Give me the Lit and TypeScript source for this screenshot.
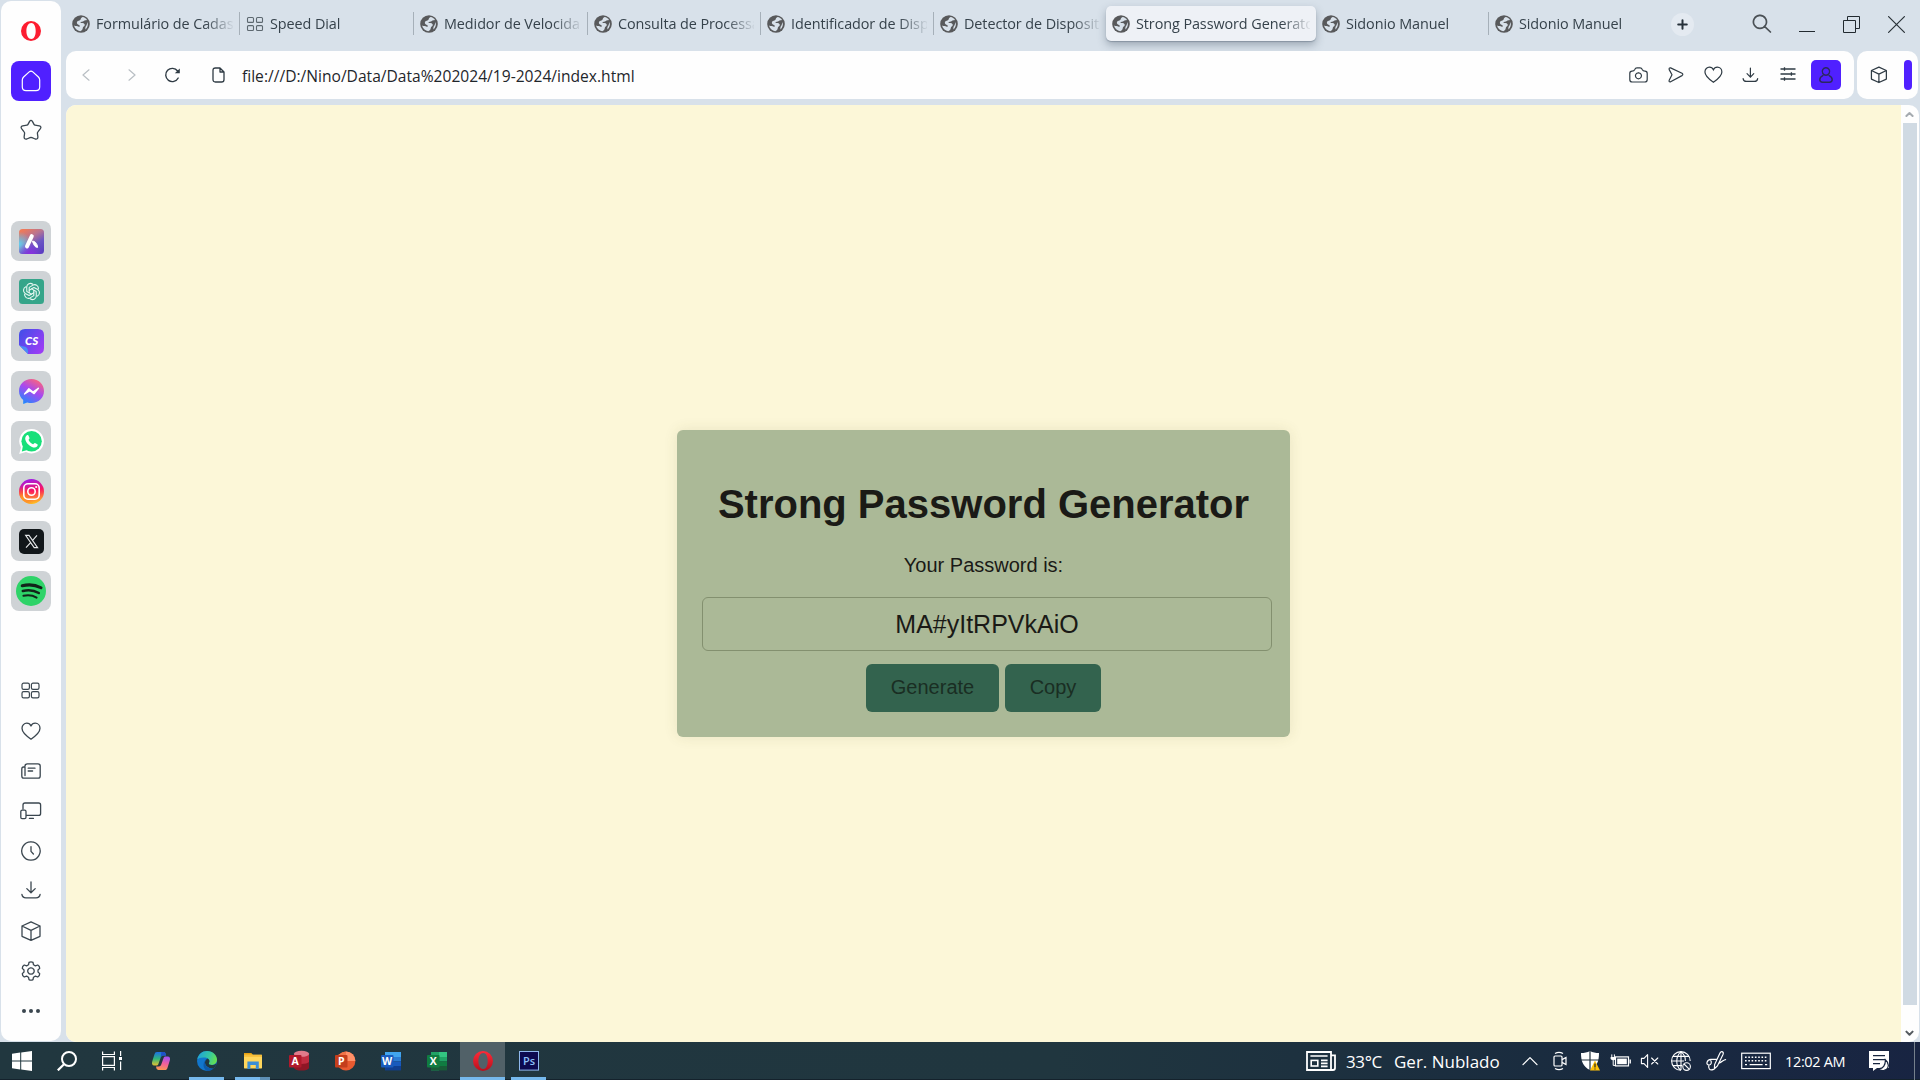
import { LitElement, html, svg, css, nothing } from "lit";
import { customElement, property, state } from "lit/decorators.js";
import { classMap } from "lit/directives/class-map.js";

/* ---------- icon drawings ---------- */

const pic = (w: number, h: number, body: unknown) => html`<svg
  width=${w} height=${h} viewBox="0 0 ${w} ${h}" fill="none">${body}</svg>`;

const line = (w: number, h: number, d: string, color = "#3a464f", sw = 1.3) =>
  pic(w, h, svg`<path d=${d} stroke=${color} stroke-width=${sw} stroke-linecap="round" stroke-linejoin="round"/>`);

const HEART = "M10 17.2 C6.5 14.8 1 10.8 1 6.3 C1 3.3 3.2 1.2 5.8 1.2 C7.8 1.2 9.3 2.4 10 4 C10.7 2.4 12.2 1.2 14.2 1.2 C16.8 1.2 19 3.3 19 6.3 C19 10.8 13.5 14.8 10 17.2 Z";
const BOX = "M10 .8 L19 5 V15.3 L10 19.4 L1 15.3 V5 Z M1 5 L10 9.3 L19 5 M10 9.3 V19.4";
const DOWN = "M10 1 V11.5 M5.8 7.6 L10 11.7 L14.2 7.6 M.9 13.4 C1.2 15.8 2.6 16.8 5 16.8 H15 C17.4 16.8 18.8 15.8 19.1 13.4";

const globe = () => pic(18, 18, svg`
  <circle cx="9" cy="9" r="8.8" fill="#58595b"/>
  <path d="M10.6 1.9 C12.4 2.2 14 3.3 15 4.8 C14.4 5.6 12.6 5 11.8 6 C11 7.2 9 6.4 8.2 7.6 C9.4 8.4 11.6 7.8 12.6 9.2 C13.4 11 11 11.4 10.8 13 C10.6 14.6 9.6 16 8.2 16.2 C5.2 15.9 2.6 13.6 2 10.6 C3.6 11.4 5.4 11 6.8 11.8 C8 11.8 8.2 10.4 7 9.9 C5.4 9.6 4.4 8.4 5 7 C5.6 5.4 8 6 8.6 4.6 C8.8 3.4 9.4 2.2 10.6 1.9 Z" fill="#d8e1ea"/>
  <path d="M15.6 7 C16.4 9.6 15.6 12.6 13.6 14.4 C13 12.8 13.6 11.6 14.4 10.6 C15 9.6 15.2 8.2 15.6 7 Z" fill="#d8e1ea"/>`);
const dial = () => pic(18, 18, svg`<g stroke="#5d6870" stroke-width="1.1">
  <rect x="1.5" y="2.5" width="6" height="4.9" rx="1"/><rect x="10.5" y="2.5" width="6" height="4.9" rx="1"/>
  <rect x="1.5" y="10.6" width="6" height="4.9" rx="1"/><rect x="10.5" y="10.6" width="6" height="4.9" rx="1"/></g>`);
const operaO = (id: string, a: string, b: string) => pic(20, 20, svg`
  <defs><linearGradient id=${id} x1="0" y1="0" x2="0" y2="1"><stop offset="0" stop-color=${a}/><stop offset="1" stop-color=${b}/></linearGradient></defs>
  <path fill-rule="evenodd" fill="url(#${id})" d="M10 0 A10 10 0 1 0 10 20 A10 10 0 1 0 10 0 Z M10.3 2 C13 2 14.7 5.4 14.7 10 C14.7 14.6 13 18 10.3 18 C7.4 18 5.4 14.6 5.4 10 C5.4 5.4 7.4 2 10.3 2 Z"/>`);
const home = () => line(20, 22, "M1.3 10 C1.3 8.6 1.7 7.9 2.6 7 L8.2 1.9 C9.4 .9 10.6 .9 11.8 1.9 L17.4 7 C18.3 7.9 18.7 8.6 18.7 10 V17 C18.7 19.4 17.4 20.6 15 20.6 H5 C2.6 20.6 1.3 19.4 1.3 17 Z", "#fff", 1.2);
const star = () => line(22, 22, "M9.6 2.4 Q11 .4 12.4 2.4 L14 5.4 Q14.3 6 15 6.1 L19.3 6.9 Q21.8 7.6 20.4 9.6 L17.9 12.8 Q17.3 13.5 17.4 14.4 L17.9 18 Q17.8 20.7 15.2 20 L12 18.7 Q11 18.3 10 18.7 L6.8 20 Q4.2 20.7 4.1 18 L4.6 14.4 Q4.7 13.5 4.1 12.8 L1.6 9.6 Q.2 7.6 2.7 6.9 L7 6.1 Q7.7 6 8 5.4 Z");

const appIcons = [
  // Aria
  () => pic(25, 25, svg`<defs>
    <linearGradient id="ar" x1=".2" y1="0" x2=".8" y2="1"><stop offset="0" stop-color="#f07a58"/><stop offset=".35" stop-color="#b87490"/><stop offset=".65" stop-color="#6a56c4"/><stop offset="1" stop-color="#5a3fc0"/></linearGradient>
    <radialGradient id="ar2" cx="0" cy=".6" r=".5"><stop offset="0" stop-color="#5fd0f0"/><stop offset="1" stop-color="#5fd0f0" stop-opacity="0"/></radialGradient>
    <radialGradient id="ar3" cx=".45" cy="1" r=".5"><stop offset="0" stop-color="#8a30e0"/><stop offset="1" stop-color="#8a30e0" stop-opacity="0"/></radialGradient></defs>
    <rect width="25" height="25" rx="3.5" fill="url(#ar)"/><rect width="25" height="25" rx="3.5" fill="url(#ar2)"/><rect width="25" height="25" rx="3.5" fill="url(#ar3)"/>
    <path d="M12.8 7.2 L8 17.4" stroke="#fff" stroke-width="4" stroke-linecap="round"/>
    <path d="M13.2 12.2 C15.6 11.8 18.4 14.4 18.6 18.4 C15.8 18.4 15.2 16.2 13.2 12.2 Z" fill="#fff" stroke="#fff" stroke-width="1"/>`),
  // ChatGPT
  () => pic(25, 25, svg`<rect width="25" height="25" rx="3.5" fill="#36a58a"/>
    <g stroke="#e6f6f1" stroke-width="1.1" stroke-linejoin="round" stroke-linecap="round">
    ${[0, 60, 120, 180, 240, 300].map((a) => svg`<path transform="rotate(${a} 12.5 12.5)" d="M10.2 13.8 V8.4 L14 6.1 C16.6 4.8 19.8 6.8 19.4 10"/>`)}</g>`),
  // ChatSonic
  () => pic(25, 25, svg`<defs><linearGradient id="cs" x1="0" y1="0" x2="1" y2=".7"><stop offset="0" stop-color="#3d4fe8"/><stop offset="1" stop-color="#9a3df5"/></linearGradient></defs>
    <path d="M6 0 H19 Q25 0 25 6 V19 Q25 25 19 25 H9 L0 16 V6 Q0 0 6 0 Z" fill="url(#cs)"/>
    <path d="M0 16 L9 25 C9.4 21 8.8 19 6.8 18 C4.6 17 2 17.6 0 16 Z" fill="#4a8cf8"/>
    <text x="12.6" y="16.2" text-anchor="middle" font-family="Lato, sans-serif" font-weight="900" font-style="italic" font-size="11.5" fill="#fff">CS</text>`),
  // Messenger
  () => pic(25, 25, svg`<defs><linearGradient id="ms" x1=".75" y1="0" x2=".2" y2="1"><stop offset="0" stop-color="#ff6678"/><stop offset=".45" stop-color="#a848f0"/><stop offset="1" stop-color="#1a8cff"/></linearGradient></defs>
    <path d="M12.5 0 C5.4 0 0 5.2 0 12 C0 15.8 1.6 18.8 4.2 21 V25 L8.2 23.4 C9.6 23.8 11 24 12.5 24 C19.6 24 25 18.8 25 12 C25 5.2 19.6 0 12.5 0 Z" fill="url(#ms)"/>
    <path d="M5.6 15 L9.9 9.8 L14 13 L19.4 9.2 L15.1 14.6 L10.8 11.7 Z" fill="#fff" stroke="#fff" stroke-width="1.4" stroke-linejoin="round"/>`),
  // WhatsApp
  () => pic(25, 25, svg`<path d="M12.7 0 A12.2 12.2 0 0 0 2 18.4 L.2 25 L7 23 A12.2 12.2 0 1 0 12.7 0 Z" fill="#fff"/>
    <circle cx="12.6" cy="12.3" r="10.2" fill="#18e07a"/><path d="M2.8 22.4 L4 16.6 L8.6 21 Z" fill="#18e07a"/>
    <path d="M7.6 6.6 C8.4 5.8 9.3 6 9.6 6.8 L10.5 9 C10.7 9.8 9.6 10.4 9.6 11 C10.2 12.8 12.2 14.6 14 15.2 C14.8 15.3 15.2 13.8 16 14 L18.4 15.2 C19.4 16 18.2 18.2 16 18.6 C11.4 18.6 6.2 13.4 6.2 9.4 C6.3 8.2 6.9 7.2 7.6 6.6 Z" fill="#fff"/>`),
  // Instagram
  () => pic(25, 25, svg`<defs><linearGradient id="ig" x1=".3" y1="0" x2=".5" y2="1"><stop offset="0" stop-color="#9a1df0"/><stop offset=".5" stop-color="#fb1560"/><stop offset="1" stop-color="#ffc020"/></linearGradient>
    <radialGradient id="ig2" cx=".1" cy=".8" r=".5"><stop offset="0" stop-color="#ffa820"/><stop offset="1" stop-color="#ff8020" stop-opacity="0"/></radialGradient></defs>
    <circle cx="12.5" cy="12.5" r="12.5" fill="url(#ig)"/><circle cx="12.5" cy="12.5" r="12.5" fill="url(#ig2)"/>
    <rect x="4.8" y="4.8" width="15.4" height="15.4" rx="4.2" stroke="#fff" stroke-width="1.6"/>
    <circle cx="12.5" cy="12.5" r="3.7" stroke="#fff" stroke-width="1.6"/><circle cx="17.2" cy="8" r="1.1" fill="#fff"/>`),
  // X
  () => pic(25, 25, svg`<rect width="25" height="25" rx="5" fill="#12171a"/>
    <path d="M6.6 6.4 H10 L18.6 18.6 H15.2 Z M18 6.4 L13.4 11.6 M11.6 13.6 L7 18.6" stroke="#e8eaeb" stroke-width="1.1"/>`),
  // Spotify
  () => pic(30, 30, svg`<circle cx="15" cy="15" r="15" fill="#2ed368"/>
    <g stroke="#12231a" stroke-linecap="round"><path d="M6.2 9.8 C12.6 8.2 19.4 8.8 25 11.8" stroke-width="3"/><path d="M6.8 15 C12.4 13.6 18 14.2 22.8 17" stroke-width="2.5"/><path d="M7.4 19.8 C12 18.8 16.6 19.2 20.6 21.6" stroke-width="2"/></g>`),
];

const toolIcons = [
  () => pic(19, 17, svg`<g stroke="#3a464f" stroke-width="1.2"><rect x="1" y="1.2" width="7.4" height="6.2" rx="1.6"/><rect x="10.4" y="1.2" width="7.6" height="6.2" rx="1.6"/><rect x="1" y="9.6" width="7.4" height="6.2" rx="1.6"/><rect x="10.4" y="9.6" width="7.6" height="6.2" rx="1.6"/></g>`),
  () => line(20, 18, HEART),
  () => line(20, 16, "M4 3 C4 1.4 4.8 .8 6.4 .8 H17 C18.6 .8 19.2 1.4 19.2 3 V13 C19.2 14.6 18.6 15.2 17 15.2 H3 C1.4 15.2 .8 14.6 .8 13 V6 C.8 4.6 1.4 4 2.6 4 H4 V12.6 M7.2 5.2 H14 M7.2 8 H11.6"),
  () => line(22, 18, "M3 6.8 V3 C3 1.6 3.6 1 5 1 H18.6 C20 1 20.6 1.6 20.6 3 V11.4 C20.6 12.8 20 13.4 18.6 13.4 H6.6 M2.4 8.2 H4.6 C5.6 8.2 6 8.6 6 9.6 V15.2 C6 16.2 5.6 16.6 4.6 16.6 H2 C1 16.6 .8 16.2 .8 15.2 V9.6 C.8 8.6 1.2 8.2 2.4 8.2 M9.4 16.4 H13.4"),
  () => line(20, 20, "M10 .8 A9.2 9.2 0 1 1 9.9 .8 M10 5.6 V10.4 L12.4 13"),
  () => line(20, 19, DOWN),
  () => line(20, 20, BOX),
  () => line(20, 20, "M8 1.4 Q10 .2 12 1.4 L12.5 3.8 L14.4 4.9 L16.8 4 Q18.8 5.2 18.7 7.4 L17 9 V11 L18.7 12.6 Q18.8 14.8 16.8 16 L14.4 15.1 L12.5 16.2 L12 18.6 Q10 19.8 8 18.6 L7.5 16.2 L5.6 15.1 L3.2 16 Q1.2 14.8 1.3 12.6 L3 11 V9 L1.3 7.4 Q1.2 5.2 3.2 4 L5.6 4.9 L7.5 3.8 Z M10 6.8 A3.2 3.2 0 1 1 9.9 6.8"),
  () => pic(20, 6, svg`<g fill="#3a464f"><circle cx="3" cy="3" r="2"/><circle cx="10" cy="3" r="2"/><circle cx="17" cy="3" r="2"/></g>`),
];

const office = (letter: string, dark: string, back: unknown) => pic(22, 22, svg`${back}
  <rect x="1" y="5" width="12.5" height="12.5" rx="1" fill=${dark}/>
  <text x="7.2" y="14.9" text-anchor="middle" font-family="Open Sans, sans-serif" font-weight="700" font-size="10.5" fill="#fff">${letter}</text>`);

interface Task { icon: () => unknown; run?: "on" | "stack" | "active"; }
const tasks: Task[] = [
  { icon: () => pic(20, 20, svg`<path fill="#fff" d="M0 2.8 L8.2 1.6 V9.4 H0 Z M9.2 1.4 L20 0 V9.4 H9.2 Z M0 10.4 H8.2 V18.4 L0 17.2 Z M9.2 10.4 H20 V20 L9.2 18.5 Z"/>`) },
  { icon: () => pic(20, 20, svg`<circle cx="12" cy="8" r="7" stroke="#fff" stroke-width="2"/><path d="M7 13.2 L.8 19.4" stroke="#fff" stroke-width="2.2"/>`) },
  { icon: () => pic(20, 20, svg`<path d="M.6 .5 V3.5 H12.4 V.5 M.6 19.5 V16.5 H12.4 V19.5 M.6 5.6 H12.4 V14.4 H.6 Z M18.6 0 V5 M18.6 10.6 V19" stroke="#fff" stroke-width="1.2"/><rect x="17" y="6" width="3" height="3" fill="#fff"/>`) },
  { icon: () => pic(20, 20, svg`<defs><linearGradient id="cp1" x1="0" y1="0" x2="0" y2="1"><stop offset="0" stop-color="#1c6fe8"/><stop offset=".5" stop-color="#2fb87a"/><stop offset="1" stop-color="#e8c030"/></linearGradient>
      <linearGradient id="cp2" x1=".5" y1="0" x2=".3" y2="1"><stop offset="0" stop-color="#a552f0"/><stop offset=".5" stop-color="#f0609a"/><stop offset="1" stop-color="#fa9a50"/></linearGradient></defs>
      <path d="M6 1 H12.6 C14.4 1 14.6 2.6 15 4.4 H12.4 C10.6 4.4 10 5.6 9.4 7.4 L7.4 13 C7 14.2 6.4 14.6 5 14.6 H3.4 C1 14.6 .6 12.6 1.2 10.6 L3.4 3.6 C4 1.8 4.6 1 6 1 Z" fill="url(#cp1)"/>
      <path d="M14 19 H7.4 C5.6 19 5.4 17.4 5 15.6 H7.6 C9.4 15.6 10 14.4 10.6 12.6 L12.6 7 C13 5.8 13.6 5.4 15 5.4 H16.6 C19 5.4 19.4 7.4 18.8 9.4 L16.6 16.4 C16 18.2 15.4 19 14 19 Z" fill="url(#cp2)"/>
      <path d="M10.4 1 H12.6 C14.4 1 14.6 2.6 15 4.4 H12.4 C10.8 4.4 10 5.4 9.4 7.4 Z" fill="#1e50c8"/>`) },
  { run: "on", icon: () => pic(20, 20, svg`<defs><linearGradient id="ed1" x1="0" y1=".2" x2="1" y2=".5"><stop offset="0" stop-color="#1ea0dc"/><stop offset=".6" stop-color="#35c8a0"/><stop offset="1" stop-color="#66e050"/></linearGradient></defs>
      <circle cx="10" cy="10" r="10" fill="#1176cc"/>
      <path d="M.3 8.4 C1.2 3.4 5.2 0 10 0 C16 0 20 4.4 20 8.6 C20 12 17.6 14 14.8 14 C12.4 14 11.4 13 12 12 C13.4 9.6 11.4 7 8.4 6.6 C4.6 6 1.6 7 .3 8.4 Z" fill="url(#ed1)"/>
      <path d="M12 12 C11.4 13 12.4 14 14.8 14 C16.6 14 18.2 13.4 19 12.4 L19.6 13 C18.8 14.8 17.4 17 16 17.8 C11 17.4 8 14.6 8 11.6 C8 9.6 9 8.4 10.6 7.6 C12.8 9 12.8 10.6 12 12 Z" fill="#22383f"/>
      <path d="M8 11.4 C8 15 11.6 18 16.4 17.4 C14.6 19.2 12.4 20 10 20 C7 18.4 6.2 15.4 6.6 13 C7 10.4 8.4 8.6 10.4 7.8 C9 8.6 8 9.8 8 11.4 Z" fill="#0d5aa8"/>`) },
  { run: "stack", icon: () => pic(20, 18, svg`<path d="M1 1 H8.4 L10 3 H1 Z" fill="#e6a010"/><rect x="1" y="2.8" width="18" height="13.6" rx=".6" fill="#ffd65c"/><rect x="1" y="2.8" width="18" height="2" fill="#f7be3a"/>
      <path d="M4.4 17 V9.4 H15.8 V17 H12.8 V13 H7.4 V17 Z" fill="#3c8fd6"/>`) },
  { icon: () => office("A", "#b0192b", svg`<path d="M6 4 V18 C7 21.4 20 21.4 21 18 V4 Z" fill="#8e1625"/><path d="M6 4 V12 C8 14.5 19 14.5 21 12 V4 Z" fill="#c02c40"/><ellipse cx="13.5" cy="3.8" rx="7.6" ry="3" fill="#e07a8a"/>`) },
  { icon: () => office("P", "#c43e1c", svg`<circle cx="12" cy="11" r="9.4" fill="#e85a30"/><path d="M12 1.6 A9.4 9.4 0 0 1 21.4 11 H12 Z" fill="#ff9068"/><path d="M12 1.6 A9.4 9.4 0 0 0 2.6 11 H12 Z" fill="#f07448"/>`) },
  { icon: () => office("W", "#1a5bbd", svg`<path d="M5 2 H21 V7 H5 Z" fill="#41a5ee"/><path d="M5 7 H21 V11.4 H5 Z" fill="#2b7cd3"/><path d="M5 11.4 H21 V16 H5 Z" fill="#185abd"/><path d="M5 16 H21 V20.4 H5 Z" fill="#103f91"/>`) },
  { icon: () => office("X", "#107c41", svg`<path d="M5 2 H13 V20.4 H5 Z" fill="#21a366"/><path d="M13 2 H21 V7 H13 Z" fill="#33c481"/><path d="M13 7 H21 V11.4 H13 Z" fill="#21a366"/><path d="M5 11.4 H21 V16 H5 Z" fill="#107c41"/><path d="M5 16 H21 V20.4 H5 Z" fill="#185c37"/>`) },
  { run: "active", icon: () => operaO("op2", "#ff2a38", "#b8101c") },
  { run: "on", icon: () => pic(20, 20, svg`<rect x=".5" y=".5" width="19" height="18.6" fill="#0c0a50" stroke="#8fb8ee"/><text x="10" y="14" text-anchor="middle" font-family="Open Sans, sans-serif" font-weight="600" font-size="11" fill="#8cc0f8">Ps</text>`) },
];

const tray = [
  () => line(16, 10, "M1 8.6 L8 1.6 L15 8.6", "#fff", 1.3),
  () => pic(16, 20, svg`<g stroke="#fff" stroke-width="1.2"><rect x="2" y="5" width="8" height="10" rx="1"/><path d="M10 8.6 L14 6.4 V13.6 L10 11.4 M3 2.6 Q7 .2 11 2.6 M3 17.4 Q7 19.8 11 17.4"/></g>`),
  () => pic(20, 20, svg`<path d="M10 0 C12.6 1.6 15.8 2 19 2 C19 10.4 17 15.6 10 19 C3 15.6 1 10.4 1 2 C4.2 2 7.4 1.6 10 0 Z" fill="#fff"/><path d="M10 0 V19 M1 9 H19" stroke="#20303c" stroke-width="1.2"/>
    <path d="M15 9.4 L20 19.6 H10 Z" fill="#ffc20a"/><path d="M15 12.6 V16.4 M15 17.4 V18.6" stroke="#222" stroke-width="1.2"/>`),
  () => pic(21, 20, svg`<g stroke="#fff"><rect x="5.5" y="5.9" width="13" height="9" stroke-width="1.2"/><path d="M20.2 8.4 V12.4" stroke-width="1.4"/></g><rect x="7.2" y="7.6" width="9.6" height="5.6" fill="#fff"/>
    <path d="M1.8 3.4 V6 M4.4 3.4 V6 M3.2 9 V14.4 H5" stroke="#fff"/><path d="M.6 6 H5.8 V8 Q3.2 10.4 .6 8 Z" fill="#fff"/>`),
  () => line(20, 16, "M1.4 5.4 H4 L7.6 1.6 V14.4 L4 10.6 H1.4 Z M11.6 5 L17.8 11 M17.8 5 L11.6 11", "#fff", 1.1),
  () => pic(22, 22, svg`<g stroke="#fff" stroke-width="1.1"><path d="M20.2 11 A9.3 9.3 0 1 0 11 20.2"/><path d="M11 1.6 C5.4 6.4 5.4 15.6 10.6 20.2 M11 1.6 C14.4 4.4 15.6 7.6 15.4 11 M11 1.6 V20 M3 6.4 H19 M1.6 11 H14 M3 15.6 H12"/><circle cx="16.6" cy="16.6" r="3.8"/><path d="M14 14 L19.2 19.2"/></g>`),
  () => pic(22, 22, svg`<g stroke="#fff" stroke-width="1.2" stroke-linecap="round"><path d="M16.6 1.6 C18.4 1.6 18.6 3 18 4.4 L12.4 16 L9.4 18.8 L9.6 14.6 L15 3 C15.4 2.2 15.8 1.6 16.6 1.6 Z M12 9.4 H6 C1.4 9.8 .6 15 4 15 C6.4 15 6.8 12 5.8 10.6 M4 15 C2.6 18.6 5 21 8.4 19.4 M14.6 13 C17.4 11.6 19 9.6 20.6 9.6"/></g>`),
  () => pic(30, 18, svg`<rect x=".7" y="1.2" width="28.6" height="15.4" stroke="#fff" stroke-width="1.2"/>
    <g stroke="#fff" stroke-width="1.4" stroke-dasharray="1.6 1.7"><path d="M4 5.2 H26.4"/><path d="M4 8.7 H26.4"/></g><path d="M4 12.6 H6 M8.6 12.6 H21.6 M24 12.6 H26.2" stroke="#fff" stroke-width="1.4"/>`),
];

/* ---------- browser tab ---------- */

@customElement("browser-tab")
class BrowserTab extends LitElement {
  @property() label = "";
  @property({ type: Boolean }) dial = false;
  static styles = css`
    :host { display: flex; align-items: center; gap: 6px; box-sizing: border-box; height: 35px; padding: 0 6px; min-width: 0; }
    svg { display: block; flex: none; }
    .label { flex: 1; min-width: 0; overflow: hidden; white-space: nowrap; font: 14.4px/22px "Open Sans", "Noto Sans", sans-serif; letter-spacing: -0.08px; color: #36424b;
      -webkit-mask-image: linear-gradient(90deg, #000 calc(100% - 28px), transparent calc(100% + 2px)); mask-image: linear-gradient(90deg, #000 calc(100% - 28px), transparent calc(100% + 2px)); }
  `;
  render() {
    return html`${this.dial ? dial() : globe()}<span class="label">${this.label}</span>`;
  }
}

/* ---------- generator card ---------- */

@customElement("password-card")
class PasswordCard extends LitElement {
  @state() private password = "MA#yItRPVkAiO";
  static styles = css`
    :host { display: block; box-sizing: border-box; width: 613px; height: 307px; padding: 25px; border-radius: 6px; background: #abb997;
      box-shadow: 0 0 14px rgba(90, 90, 40, 0.12); font-family: "Liberation Sans", Arial, sans-serif; color: #1a1a16; text-align: center; }
    h1 { margin: 25px 0 0; font-size: 40px; line-height: 48px; white-space: nowrap; }
    p { margin: 25px 0 0; font-size: 20px; line-height: 24px; }
    .out { box-sizing: border-box; width: 570px; height: 54px; margin: 20px 0 0; border: 1px solid #83906f; border-radius: 6px; font-size: 25px; line-height: 53px; }
    .row { display: flex; justify-content: center; gap: 6px; margin-top: 13px; }
    button { height: 48px; padding: 0 0 2px; border: 0; border-radius: 6px; background: #33634e; color: #1a2e23; font: 20px/46px "Liberation Sans", Arial, sans-serif; }
    .gen { width: 133px; }
    .cpy { width: 96px; }
  `;
  private generate() {
    const chars = "ABCDEFGHIJKLMNOPQRSTUVWXYZabcdefghijklmnopqrstuvwxyz0123456789@#$%";
    this.password = Array.from({ length: 13 }, () => chars[Math.floor(Math.random() * chars.length)]).join("");
  }
  private copy() { navigator.clipboard?.writeText(this.password); }
  render() {
    return html`<h1>Strong Password Generator</h1>
      <p>Your Password is:</p>
      <div class="out">${this.password}</div>
      <div class="row"><button class="gen" @click=${this.generate}>Generate</button><button class="cpy" @click=${this.copy}>Copy</button></div>`;
  }
}

/* ---------- whole desktop ---------- */

const tabs = [
  { label: "Formulário de Cadast" }, { label: "Speed Dial", dial: true }, { label: "Medidor de Velocida" },
  { label: "Consulta de Processa" }, { label: "Identificador de Disp" }, { label: "Detector de Disposit" },
  { label: "Strong Password Generato", active: true }, { label: "Sidonio Manuel" }, { label: "Sidonio Manuel" },
] as { label: string; dial?: boolean; active?: boolean }[];

@customElement("app-root")
class AppRoot extends LitElement {
  static styles = css`
    :host { display: grid; grid-template-rows: 1042px 38px; width: 1920px; height: 1080px; overflow: hidden; background: #d8e1ea; font-family: "Open Sans", "Noto Sans", sans-serif; }
    svg { display: block; flex: none; }
    .browser { display: grid; grid-template-columns: 60px 1852px; column-gap: 5px; padding: 0 2px 0 1px; }

    .side { display: flex; flex-direction: column; align-items: center; margin: 1px 0; background: #fefefe; border-radius: 10px; }
    .logo { display: grid; place-items: center; height: 60px; }
    .home { display: grid; place-items: center; width: 40px; height: 40px; border-radius: 8px; background: #5020ff; }
    .star { display: grid; place-items: center; height: 58px; margin: 0 1px 62px 0; }
    .apps { display: grid; gap: 10px; margin-bottom: 59.5px; }
    .app { display: grid; place-items: center; width: 40px; height: 40px; border-radius: 8px; background: #cfd3d6; }
    .tools { display: grid; grid-auto-rows: 40px; justify-items: center; align-items: center; margin-right: 1px; }

    .main { display: grid; grid-template-rows: 51px 48px 943px; min-width: 0; }
    .top { display: grid; grid-template-columns: 1594px 45px 79px 45px 45px 45px; align-items: start; }
    .tabs { display: grid; grid-template-columns: 174px 174px 174px 173px 173px 172px 210px 173px 171px; padding-top: 6px; }
    .tab { display: flex; align-items: center; height: 35px; }
    .tab browser-tab { flex: 1; }
    .sep { width: 1px; height: 23px; background: #a6b0b9; }
    .active { background: #eef1f6; border-radius: 5px; box-shadow: 0 4px 8px rgba(60, 75, 95, 0.38), 0 1px 1px rgba(60, 75, 95, .3); }
    .ctl { display: grid; place-items: center; height: 48px; }
    .find { width: 45px; justify-self: end; }
    .plus { display: grid; place-items: center; width: 23px; height: 23px; border-radius: 50%; background: #e4eaf1; }

    .bars { display: grid; grid-template-columns: 1788px 61px; gap: 3px; }
    .bar { display: flex; align-items: center; background: #fefefe; border-radius: 10px; }
    .nav { display: grid; grid-template-columns: 40px 52px 28px 56px; justify-items: center; align-items: center; }
    .nav svg:last-child { margin-left: 8px; }
    .url { flex: 1; font: 15.6px/24px "Open Sans", "Noto Sans", sans-serif; color: #1f262b; white-space: nowrap; padding-top: 1px; }
    .acts { display: grid; grid-template-columns: repeat(5, 37.5px) 34px; align-items: center; justify-items: center; margin-right: 13px; }
    .me { display: grid; place-items: center; width: 30px; height: 30px; border-radius: 5px; background: #5020ff; justify-self: end; }
    .ext { padding-left: 13px; gap: 16px; box-sizing: border-box; }
    .pill { width: 8px; height: 30px; border-radius: 4px; background: #5020ff; }

    .content { display: grid; grid-template-columns: 1835px 17px; background: #fefefe; border-radius: 10px; overflow: hidden; margin-top: 6px; height: 937px; }
    .page { display: grid; place-items: center; background: #fcf7d8; box-sizing: border-box; padding-top: 20px; }
    .scroll { display: grid; grid-template-rows: 18px 882px 37px; justify-items: center; }
    .scroll .up { align-self: center; }
    .scroll .down { align-self: end; margin-bottom: 5px; }
    .thumb { width: 14px; background: #d0dae3; }

    .taskbar { display: grid; grid-template-columns: 44px 45px 49px repeat(9, 46px) 1fr auto; background: linear-gradient(90deg, #21373f 0, #20363f 55%, #1a2c3f 80%, #182442); box-sizing: border-box; border-bottom: 1px solid #14222c; height: 38px; }
    .task { display: grid; place-items: center; box-sizing: border-box; height: 38px; position: relative; }
    .task:nth-child(3) { padding-right: 4px; }
    .task.active-app { background: #516168; width: 45px; }
    .under { position: absolute; bottom: 0; left: 5px; width: 35px; height: 3px; background: #76b9ed; }
    .active-app .under { left: 0; width: 45px; }
    .stack .under { background: linear-gradient(90deg, #76b9ed 25px, #5e90b6 25px); }
    .tray { display: flex; align-items: center; height: 38px; color: #fff; }
    .weather { display: flex; align-items: center; width: 210px; font-size: 17px; white-space: nowrap; }
    .deg { margin-left: 10px; width: 48px; letter-spacing: -0.4px; }
    .icons { display: grid; grid-template-columns: 30px 30px 30px 30px 30px 32px 38px 42px; justify-items: center; align-items: center; margin: 0 1px 0 -1px; }
    .time { width: 84px; margin-left: 7px; font-size: 14.5px; letter-spacing: -0.35px; white-space: nowrap; }
    .edge { width: 1px; height: 38px; margin: 0 5px 0 25px; background: #75808c; }
  `;

  render() {
    const C = "#2f3b44";
    return html`
      <div class="browser">
        <nav class="side">
          <div class="logo">${operaO("op1", "#ff1b2d", "#fa1e33")}</div>
          <div class="home">${home()}</div>
          <div class="star">${star()}</div>
          <div class="apps">${appIcons.map((i) => html`<div class="app">${i()}</div>`)}</div>
          <div class="tools">${toolIcons.map((i) => i())}</div>
        </nav>
        <div class="main">
          <div class="top">
            <div class="tabs">
              ${tabs.map((t, i) => html`<div class=${classMap({ tab: true, active: !!t.active })}>
                <browser-tab .label=${t.label} .dial=${!!t.dial}></browser-tab>
                ${[0, 1, 2, 3, 4, 7].includes(i) ? html`<span class="sep"></span>` : nothing}</div>`)}
            </div>
            <div class="ctl"><div class="plus">${line(11, 11, "M5.5 1.2 V9.8 M1.2 5.5 H9.8", "#26313a", 2)}</div></div>
            <div class="ctl find">${line(20, 20, "M8 1.4 A6.5 6.5 0 1 1 7.9 1.4 M12.8 12.6 L18.4 18", "#4a5055", 1.7)}</div>
            <div class="ctl">${pic(16, 16, svg`<path d="M0 15.5 H16" stroke="#222a30"/>`)}</div>
            <div class="ctl">${pic(17, 17, svg`<path d="M.5 4.5 H12.5 V16.5 H.5 Z M4.5 4.5 V.5 H16.5 V12.5 H12.5" stroke="#222a30"/>`)}</div>
            <div class="ctl">${line(17, 17, "M.6 .6 L16.4 16.4 M16.4 .6 L.6 16.4", "#2a3238", 1.2)}</div>
          </div>
          <div class="bars">
            <div class="bar">
              <div class="nav">
                ${line(8, 12, "M7 .8 L1 6 L7 11.2", "#b9bfc4", 1.2)}
                ${line(8, 12, "M1 .8 L7 6 L1 11.2", "#b9bfc4", 1.2)}
                ${pic(17, 16, svg`<path d="M13.6 4 A6.6 6.6 0 1 0 14.2 11" stroke=${C} stroke-width="1.4" stroke-linecap="round"/><path d="M15.8 1.4 V6.2 H10.8 Z" fill=${C}/>`)}
                ${line(13, 16, "M3.4 1 H8 L12 5 V12.4 C12 14.2 11 15 9.6 15 H3.4 C1.8 15 1 14.2 1 12.6 V3.4 C1 1.8 1.8 1 3.4 1 M8 1.2 V5 H11.8", C, 1.3)}
              </div>
              <div class="url">file:///D:/Nino/Data/Data%202024/19-2024/index.html</div>
              <div class="acts">
                ${line(19, 16, "M3 4.2 C4.6 4.2 5.2 3.8 5.8 2.4 C6.2 1.2 6.8 .8 8 .8 H11 C12.2 .8 12.8 1.2 13.2 2.4 C13.8 3.8 14.4 4.2 16 4.2 C17.6 4.2 18.2 5 18.2 6.4 V12.4 C18.2 14.2 17.2 15 15.6 15 H3.4 C1.8 15 .8 14.2 .8 12.4 V6.4 C.8 5 1.4 4.2 3 4.2 M9.5 5.8 A3 3 0 1 1 9.4 5.8", C, 1.2)}
                ${line(16, 16, "M2.6 .9 L14 6.3 Q15.6 7.4 14 8.6 L2.6 14.8 Q.6 15.2 1.2 13.2 L4 7.8 L1.2 2.6 Q.8 .6 2.6 .9", C, 1.2)}
                ${pic(19, 18, svg`<path transform="scale(.94)" d=${HEART} stroke=${C} stroke-width="1.3"/>`)}
                ${pic(17, 16, svg`<path transform="translate(.4 .2) scale(.8 .85)" d=${DOWN} stroke=${C} stroke-width="1.5" stroke-linecap="round"/>`)}
                ${pic(16, 18, svg`<path d="M.5 3 H15.5 M.5 8 H15.5 M.5 13 H15.5 M4.5 1.2 V4.8 M11.4 6.2 V9.8 M4.5 11.2 V14.8" stroke=${C} stroke-width="1.3"/>`)}
                <div class="me">${line(14, 16, "M7 .8 A3.7 3.7 0 1 1 6.9 .8 M3.8 8.6 C1.8 9.6 .8 11.2 .8 12.8 C.8 14.6 2 15.2 3.6 15.2 H10.4 C12 15.2 13.2 14.6 13.2 12.8 C13.2 11.2 12.2 9.6 10.2 8.6", "#2b2860", 1.4)}</div>
              </div>
            </div>
            <div class="bar ext">
              ${pic(18, 18, svg`<path transform="translate(.6 .4) scale(.83 .83)" d=${BOX} stroke=${C} stroke-width="1.5" stroke-linejoin="round"/>`)}
              <span class="pill"></span>
            </div>
          </div>
          <div class="content">
            <div class="page"><password-card></password-card></div>
            <div class="scroll">
              <div class="up">${line(9, 7, "M1.4 5 L4.5 2 L7.6 5", "#a5abb0", 2)}</div>
              <div class="thumb"></div>
              <div class="down">${line(9, 7, "M1.4 1.6 L4.5 4.8 L7.6 1.6", "#555b60", 2)}</div>
            </div>
          </div>
        </div>
      </div>
      <footer class="taskbar">
        ${tasks.map((t) => html`<div class=${classMap({ task: true, stack: t.run === "stack", "active-app": t.run === "active" })}>
          ${t.icon()}${t.run ? html`<span class="under"></span>` : nothing}</div>`)}
        <span></span>
        <div class="tray">
          <div class="weather">
            ${pic(30, 20, svg`<path d="M1 1 H25 V19 H1 Z M25 4.4 H29 V17 C29 18.6 28 19 27 19 H3" stroke="#fff" stroke-width="1.8"/>
              <path d="M4.4 5 H21.6 M15 9.4 H21.6 M15 12.4 H21.6 M15 15.4 H21.6" stroke="#fff" stroke-width="1.6"/><rect x="5.2" y="9.4" width="6.6" height="5.6" stroke="#fff" stroke-width="1.6"/>`)}
            <span class="deg">33°C</span><span>Ger. Nublado</span>
          </div>
          <div class="icons">${tray.map((i) => i())}</div>
          <div class="time">12:02 AM</div>
          ${pic(20, 20, svg`<path d="M0 0 H20 V17 H8 L4 20 V17 H0 Z" fill="#fff"/><path d="M4 4.6 H16 M4 8.6 H16 M4 12.6 H11" stroke="#182640" stroke-width="1.4"/>
            <path d="M16.4 8.6 C20.4 12 20.6 18 15 19.4 C12.4 19.8 10.6 19 9.6 17.6 C14 18 16.6 14 16.4 8.6 Z" fill="#fff" stroke="#182640" stroke-width="1.2"/>`)}
          <span class="edge"></span>
        </div>
      </footer>`;
  }
}
